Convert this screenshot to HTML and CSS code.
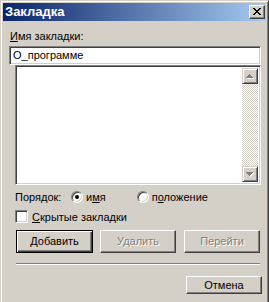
FILE: index.html
```html
<!DOCTYPE html>
<html lang="ru">

<head>
    <meta charset="UTF-8">
    <title>Закладка</title>
    <link rel="stylesheet" href="styles.css">
</head>

<body>
    <div class="window">
        <div class="titlebar">
            <span class="title">Закладка</span>
            <span class="close-btn">
                <svg width="8" height="7" viewBox="0 0 8 7" shape-rendering="crispEdges">
                    <path d="M0 0h2v1H0zM6 0h2v1H6zM1 1h2v1H1zM5 1h2v1H5zM2 2h4v1H2zM3 3h2v1H3zM2 4h4v1H2zM1 5h2v1H1zM5 5h2v1H5zM0 6h2v1H0zM6 6h2v1H6z" fill="#000" />
                </svg>
            </span>
        </div>

        <div class="content">
            <div class="name-label"><u>И</u>мя закладки:</div>
            <div class="field">О_программе</div>

            <div class="listbox">
                <div class="list-items"></div>
                <div class="scrollbar">
                    <div class="scroll-btn">
                        <svg width="8" height="5" viewBox="0 0 8 5" shape-rendering="crispEdges">
                            <path d="M4 1h1v1H4zM3 2h3v1H3zM2 3h5v1H2zM1 4h7v1H1z" fill="#fff" />
                            <path d="M3 0h1v1H3zM2 1h3v1H2zM1 2h5v1H1zM0 3h7v1H0z" fill="#808080" />
                        </svg>
                    </div>
                    <div class="scroll-track"></div>
                    <div class="scroll-btn">
                        <svg width="8" height="5" viewBox="0 0 8 5" shape-rendering="crispEdges">
                            <path d="M1 1h7v1H1zM2 2h5v1H2zM3 3h3v1H3zM4 4h1v1H4z" fill="#fff" />
                            <path d="M0 0h7v1H0zM1 1h5v1H1zM2 2h3v1H2zM3 3h1v1H3z" fill="#808080" />
                        </svg>
                    </div>
                </div>
            </div>

            <div class="order-row">
                <span class="order-label">Порядок:</span>
                <span class="radio checked"></span>
                <span class="radio-text">и<u>м</u>я</span>
                <span class="radio second"></span>
                <span class="radio-text">п<u>о</u>ложение</span>
            </div>

            <div class="check-row">
                <span class="checkbox"></span>
                <span class="check-text"><u>С</u>крытые закладки</span>
            </div>

            <div class="button-row">
                <div class="btn default"><span><u>Д</u>обавить</span></div>
                <div class="btn disabled">Удалить</div>
                <div class="btn disabled">Перейти</div>
            </div>

            <div class="separator"></div>

            <div class="footer">
                <div class="btn cancel">Отмена</div>
            </div>
        </div>
    </div>
</body>

</html>
```

FILE: styles.css
```css
body {
    margin: 0;
    background: #d4d0c8;
    font-family: 'Liberation Sans', Arial, sans-serif;
    font-size: 11px;
    color: #000;
    overflow: hidden;
}

u {
    text-decoration: underline;
    text-underline-offset: 1px;
}

.window {
    box-sizing: border-box;
    width: 269px;
    height: 306px;
    padding: 2px;
    background: #d4d0c8;
    border: 1px solid;
    border-color: #d4d0c8 #404040 #404040 #d4d0c8;
    box-shadow: inset 1px 1px #fff, inset -1px -1px #808080;
}

/* title bar */
.titlebar {
    height: 18px;
    display: flex;
    align-items: center;
    justify-content: space-between;
    padding: 0 1px 0 2px;
    background: linear-gradient(to right, #0a246a, #a6caf0);
}

.title {
    color: #fff;
    font-weight: bold;
    font-size: 13px;
    line-height: 18px;
}

.close-btn {
    box-sizing: border-box;
    width: 16px;
    height: 14px;
    display: flex;
    align-items: center;
    justify-content: center;
    padding: 0 1px 1px 0;
    background: #d4d0c8;
    border: 1px solid;
    border-color: #fff #404040 #404040 #fff;
    box-shadow: inset -1px -1px #808080;
}

/* dialog content */
.content {
    padding: 9px 0 0 6px;
}

.name-label {
    line-height: 13px;
    padding-left: 1px;
    margin-bottom: 3px;
}

.field {
    box-sizing: border-box;
    width: 252px;
    height: 19px;
    padding: 2px 0 0 3px;
    line-height: 13px;
    background: #fff;
    border: 1px solid;
    border-color: #808080 #fff #fff #808080;
    box-shadow: inset 1px 1px #404040, inset -1px -1px #d4d0c8;
}

.listbox {
    box-sizing: border-box;
    width: 246px;
    height: 120px;
    margin-left: 6px;
    display: flex;
    padding: 2px;
    background: #fff;
    border: 1px solid;
    border-color: #808080 #fff #fff #808080;
    box-shadow: inset 1px 1px #404040, inset -1px -1px #d4d0c8;
}

.list-items {
    flex: 1;
}

.scrollbar {
    width: 16px;
    display: flex;
    flex-direction: column;
}

.scroll-track {
    flex: 1;
    background: repeating-conic-gradient(#fff 0 25%, #d4d0c8 0 50%) 0 0 / 2px 2px;
}

.scroll-btn {
    box-sizing: border-box;
    height: 16px;
    display: flex;
    align-items: center;
    justify-content: center;
    background: #d4d0c8;
    border: 1px solid;
    border-color: #d4d0c8 #404040 #404040 #d4d0c8;
    box-shadow: inset 1px 1px #fff, inset -1px -1px #808080;
}

/* sort order */
.order-row {
    display: flex;
    align-items: center;
    height: 13px;
    margin: 5px 0 0 6px;
}

.order-label {
    width: 56px;
}

.radio {
    box-sizing: border-box;
    width: 12px;
    height: 12px;
    border-radius: 50%;
    background: #fff;
    border: 1px solid;
    border-color: #808080 #fff #fff #808080;
    box-shadow: inset 1px 1px #404040, inset -1px -1px #d4d0c8;
    display: flex;
    align-items: center;
    justify-content: center;
}

.radio.checked::after {
    content: "";
    width: 4px;
    height: 4px;
    border-radius: 50%;
    background: #000;
}

.radio.second {
    margin-left: 31px;
}

.radio-text {
    margin-left: 3px;
}

/* hidden bookmarks */
.check-row {
    display: flex;
    align-items: center;
    height: 13px;
    margin: 7px 0 0 6px;
}

.checkbox {
    box-sizing: border-box;
    width: 13px;
    height: 13px;
    background: #fff;
    border: 1px solid;
    border-color: #808080 #fff #fff #808080;
    box-shadow: inset 1px 1px #404040, inset -1px -1px #d4d0c8;
}

.check-text {
    margin-left: 4px;
}

/* buttons */
.button-row {
    display: flex;
    margin: 7px 0 0 7px;
}

.btn {
    box-sizing: border-box;
    width: 76px;
    height: 23px;
    display: flex;
    align-items: center;
    justify-content: center;
    background: #d4d0c8;
    border: 1px solid;
    border-color: #fff #404040 #404040 #fff;
    box-shadow: inset -1px -1px #808080;
    line-height: 13px;
}

.btn + .btn {
    margin-left: 8px;
}

.btn.default {
    width: 77px;
    margin-right: -1px;
    border-color: #000;
    box-shadow: inset 1px 1px #fff, inset -1px -1px #404040, inset -2px -2px #808080;
}

.btn.disabled {
    color: #808080;
    text-shadow: 1px 1px #fff;
}

.separator {
    width: 244px;
    height: 1px;
    margin: 10px 0 0 7px;
    background: #808080;
    border-bottom: 1px solid #fff;
}

.footer {
    display: flex;
    justify-content: flex-end;
    width: 253px;
    margin-top: 11px;
}

.btn.cancel {
    height: 18px;
}
```
